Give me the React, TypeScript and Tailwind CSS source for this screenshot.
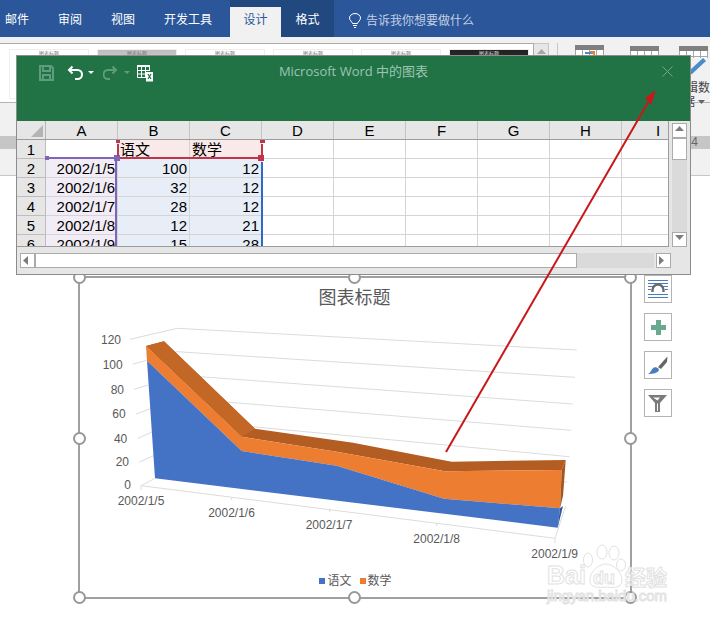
const thumbs = ["bg-white", "bg-gradient-to-b from-[#bdbdbd] to-white", "bg-white", "bg-white", "bg-white", "bg-gradient-to-b from-[#222222] to-[#555555]"];
const colWidths = ["w-[72px]", "w-[72px]", "w-[72px]", "w-[72px]", "w-[72px]", "w-[72px]", "w-[72px]", "w-[72px]", "w-[47px]"];
const colNames = ["A", "B", "C", "D", "E", "F", "G", "H", "I"];
const rows = [
  ["", "语文", "数学"],
  ["2002/1/5", "100", "12"],
  ["2002/1/6", "32", "12"],
  ["2002/1/7", "28", "12"],
  ["2002/1/8", "12", "21"],
  ["2002/1/9", "15", "28"],
];
const yLabels = [
  ["120", 121, 344],
  ["100", 122.7, 369],
  ["80", 124, 394],
  ["60", 125.7, 418],
  ["40", 127.3, 443],
  ["20", 129, 466],
  ["0", 131, 489],
] as const;
const xLabels = [
  ["2002/1/5", 141, 505],
  ["2002/1/6", 231.5, 517],
  ["2002/1/7", 329, 529],
  ["2002/1/8", 436.7, 543],
  ["2002/1/9", 554.7, 558],
] as const;
const handles = [
  "left-[-7px] top-[-7px]", "left-[268px] top-[-7px]", "right-[-7px] top-[-7px]",
  "left-[-7px] top-[154px]", "right-[-7px] top-[154px]",
  "left-[-7px] bottom-[-7px]", "left-[268px] bottom-[-7px]", "right-[-7px] bottom-[-7px]",
];

function cellBg(r: number, c: number) {
  if (r === 0 && (c === 1 || c === 2)) return "bg-[#f9e9e9]";
  if (r > 0 && c === 0) return "bg-[#f1ecf6]";
  if (r > 0 && (c === 1 || c === 2)) return "bg-[#e8eef8]";
  return "bg-white";
}

function Plot() {
  return (
    <svg className="absolute left-[-2px] top-[-2px]" width="554" height="323" viewBox="78 276 554 323">
      {/* walls */}
      <g fill="none" stroke="#dcdcdc" strokeWidth="1">
        <path d="M130 339.3 L177.3 328.3 L576.7 350" />
        <path d="M132.7 364.3 L177 351.7 L575 377.3" />
        <path d="M134 389.3 L148 385 M177 375 L572.7 404" />
        <path d="M135.7 414.3 L152 408 M177 398 L571 430.3" />
        <path d="M137.7 438.3 L152 432 M245 426 L569.3 456.7" />
        <path d="M139 462.3 L155 455" />
        <path d="M141 485.7 L155 478.3" />
        <path d="M141 485.7 L555 538.3 L565.7 506" />
        <path d="M141 485.7 V490 M231.7 497.7 V500 M329.7 509.3 V512 M436.7 523.3 V526 M555 538.3 V543" />
        <path d="M563 482 L567 482" />
      </g>
      <polygon points="146,346 164,341.3 255,428.7 353,442.7 451.7,461.7 565.7,460 561.7,470 445,471.3 336.7,451.7 241.7,436.7" fill="#b45d22" />
      <polygon points="146,346 164,341.3 255,428.7 241.7,436.7" fill="#c36727" />
      <polygon points="146,346 241.7,436.7 336.7,451.7 445,471.3 561.7,470 560,508.3 444,498.7 336.7,465.7 241.7,451 147,360.7" fill="#ed7d31" />
      <polygon points="147,360.7 241.7,451 336.7,465.7 444,498.7 560,508.3 557.7,527.7 155,478.3" fill="#4472c4" />
      <polygon points="565.7,460 561.7,470 560,508.3 563,496" fill="#a4561f" />
      <polygon points="560,508.3 557.7,527.7 563,506" fill="#2f5597" />
      <g fontSize="12" fill="#595959">
        {yLabels.map(([t, x, y]) => (
          <text key={t} x={x} y={y} textAnchor="end">{t}</text>
        ))}
        {xLabels.map(([t, x, y]) => (
          <text key={t} x={x} y={y} textAnchor="middle">{t}</text>
        ))}
      </g>
    </svg>
  );
}

function SideButtons() {
  return (
    <div className="ml-[12px] -mt-px flex flex-col gap-[10px]">
      <div className="flex h-[28px] w-[28px] items-center justify-center border border-[#b4b4b4] bg-white">
        <svg width="20" height="20" viewBox="0 0 20 20">
          <path d="M0 1.5H20 M0 4.5H20 M0 15.5H20 M0 18.5H20 M0 7.5H5 M15 7.5H20 M0 10.5H3 M17 10.5H20" stroke="#4a7ebb" strokeWidth="1" />
          <path d="M4.5 13 V11 a5.5 5.5 0 0 1 11 0 V13" fill="none" stroke="#6b6b6b" strokeWidth="2.4" />
        </svg>
      </div>
      <div className="flex h-[28px] w-[28px] items-center justify-center border border-[#b4b4b4] bg-white">
        <svg width="15" height="15" viewBox="0 0 15 15">
          <path d="M5 0H10V5H15V10H10V15H5V10H0V5H5Z" fill="#6aa88f" />
        </svg>
      </div>
      <div className="flex h-[28px] w-[28px] items-center justify-center border border-[#b4b4b4] bg-white">
        <svg width="20" height="19" viewBox="0 0 20 19">
          <path d="M10 11 L18 2 L19.5 0.5 L19 6 L13 13 Z" fill="#666666" />
          <path d="M0 18 C3 17 3 13 6 11.5 C8 10.5 11 12 11 14 C10 17 5 18 0 18Z" fill="#4a7ebb" />
        </svg>
      </div>
      <div className="flex h-[28px] w-[28px] items-center justify-center border border-[#b4b4b4] bg-white">
        <svg width="20" height="17" viewBox="0 0 20 17">
          <path d="M0 0H19L12 8V17H7V8Z" fill="#7a7a7a" />
          <path d="M9 8.5H10V16H9Z M5 2.5 H12 L9.5 5.5Z" fill="#ffffff" />
        </svg>
      </div>
    </div>
  );
}

function Sheet() {
  return (
    <div className="relative h-[126px] w-[652px] overflow-hidden border-r border-b border-[#9c9c9c] text-[15px] leading-[20px] text-black">
      <div className="flex h-[19px] border-b border-[#9c9c9c] bg-[#e6e6e6]">
        <div className="flex w-[29px] shrink-0 items-end justify-end border-r border-[#b5b5b5] pr-[2px] pb-[2px]">
          <svg width="12" height="12" viewBox="0 0 12 12"><path d="M12 0V12H0Z" fill="#b4b4b4" /></svg>
        </div>
        {colNames.map((c, i) => (
          <div key={c} className={colWidths[i] + " shrink-0 border-r border-[#c4c4c4] " + (c === "I" ? "pl-[34px] text-left" : "text-center")}>{c}</div>
        ))}
      </div>
      {rows.map((row, r) => (
        <div key={r} className="flex h-[19px]">
          <div className="w-[29px] shrink-0 border-r border-b border-[#bdbdbd] bg-[#e6e6e6] text-center">{r + 1}</div>
          {colWidths.map((w, c) => (
            <div
              key={c}
              className={
                w + " shrink-0 overflow-hidden border-r border-b border-[#d4d4d4] px-[2px] whitespace-nowrap " + cellBg(r, c) + " " +
                (r > 0 ? "text-right" : "text-left")
              }
            >
              {row[c] ?? ""}
            </div>
          ))}
        </div>
      ))}
      {/* range highlights */}
      <div className="absolute left-[31px] top-[36px] h-[2px] w-[68px] bg-[#8064b8]" />
      <div className="absolute left-[28px] top-[35px] h-[4px] w-[4px] bg-[#8064b8]" />
      <div className="absolute left-[98px] top-[40px] h-[86px] w-[2px] bg-[#8064b8]" />
      <div className="absolute left-[97px] top-[34px] h-[6px] w-[6px] bg-[#8064b8]" />
      <div className="absolute left-[103px] top-[36px] h-[2px] w-[138px] bg-[#c0354a]" />
      <div className="absolute left-[99px] top-[19px] h-[3px] w-[4px] bg-[#c0354a]" />
      <div className="absolute left-[100px] top-[23px] h-[12px] w-[2px] bg-[#c0354a]" />
      <div className="absolute left-[243px] top-[19px] h-[3px] w-[5px] bg-[#c0354a]" />
      <div className="absolute left-[244px] top-[23px] h-[12px] w-[2px] bg-[#c0354a]" />
      <div className="absolute left-[241px] top-[34px] h-[6px] w-[6px] bg-[#c0354a]" />
      <div className="absolute left-[244px] top-[41px] h-[85px] w-[2px] bg-[#2e69c8]" />
    </div>
  );
}

function ScrollButton({ dir }: { dir: "up" | "down" | "left" | "right" }) {
  const d = { up: "M0 5L4.5 0L9 5Z", down: "M0 0H9L4.5 5Z", left: "M5 0V9L0 4.5Z", right: "M0 0V9L5 4.5Z" }[dir];
  return (
    <div className="flex h-[15px] w-[15px] shrink-0 items-center justify-center border border-[#ababab] bg-white">
      <svg width="9" height="9" viewBox="0 0 9 9" className="overflow-visible"><path d={d} fill="#7d7d7d" /></svg>
    </div>
  );
}

function ChartDialog() {
  return (
    <div className="absolute left-[16px] top-[55px] z-10 h-[220px] w-[675px] border border-[#8c8c8c] bg-[#e6e6e6]">
      {/* title bar */}
      <div className="relative h-[65px] bg-[#217346] text-center font-['Open_Sans','Noto_Sans_CJK_SC',sans-serif] text-[13px] leading-[31px] text-[#9cc5b0]">
        Microsoft Word 中的图表
        <svg className="absolute left-[22px] top-[9px]" width="15" height="16" viewBox="0 0 15 16">
          <path d="M1 1H12L14 3V15H1Z M4 1.5V6H11V1.5 M4 15V10H11V15" fill="none" stroke="#5e9c7d" strokeWidth="2" />
        </svg>
        <svg className="absolute left-[50px] top-[9px]" width="28" height="16" viewBox="0 0 28 16">
          <path d="M5.5 1.5L2 5L5.5 8.5 M2.5 5H10.5a4.5 4.5 0 0 1 0 9H8" fill="none" stroke="#ffffff" strokeWidth="2" />
          <path d="M21 6H27L24 9Z" fill="#ffffff" />
        </svg>
        <svg className="absolute left-[86px] top-[9px]" width="28" height="16" viewBox="0 0 28 16">
          <path d="M9.5 1.5L13 5L9.5 8.5 M12.5 5H5a4.5 4.5 0 0 0 0 9H7" fill="none" stroke="#5e9c7d" strokeWidth="2" />
          <path d="M21 6H27L24 9Z" fill="#5e9c7d" />
        </svg>
        <svg className="absolute left-[120px] top-[9px]" width="17" height="17" viewBox="0 0 17 17">
          <path d="M0 0H13V2H0Z" fill="#ffffff" />
          <path d="M0.5 2V12.5H13M4.5 2V12.5M8.5 2V12.5M12.5 2V6M0.5 5.5H12.5M0.5 9H8" fill="none" stroke="#ffffff" strokeWidth="1" />
          <path d="M9 7H16V16.5H9Z" fill="#ffffff" />
          <path d="M11 9L14 14M14 9L11 14" stroke="#217346" strokeWidth="1.2" />
        </svg>
        <svg className="absolute left-[645px] top-[10px]" width="11" height="11" viewBox="0 0 11 11">
          <path d="M0.5 0.5L10.5 10.5M10.5 0.5L0.5 10.5" stroke="#6ea88a" strokeWidth="1" />
        </svg>
      </div>
      <div className="flex">
        <Sheet />
        <div className="ml-[3px] flex h-[124px] w-[15px] flex-col justify-between self-end bg-[#dadada]">
          <div>
            <ScrollButton dir="up" />
            <div className="h-[22px] w-[15px] border border-[#ababab] bg-white" />
          </div>
          <ScrollButton dir="down" />
        </div>
      </div>
      <div className="mt-[6px] flex h-[15px] w-[654px] pl-[3px]">
        <ScrollButton dir="left" />
        <div className="flex flex-1 bg-[#dadada]">
          <div className="h-[15px] w-[542px] border border-[#ababab] bg-white" />
        </div>
        <div className="ml-[2px]"><ScrollButton dir="right" /></div>
      </div>
    </div>
  );
}

function TableGlyph({ arrow }: { arrow?: boolean }) {
  return (
    <svg width="29" height="12" viewBox="0 0 29 12">
      <rect x="0" y="0" width="29" height="5" fill="#7f7f7f" />
      <rect x="0" y="5" width="29" height="7" fill="#ffffff" />
      <path d="M0.5 5V12M7.5 5V12M14.5 5V12M21.5 5V12M28.5 5V12M0 10.5H29" stroke="#a6a6a6" strokeWidth="1" />
      {arrow && <path d="M10 8H18" stroke="#4a8bc9" strokeWidth="2" />}
      {arrow && <path d="M14 6H20V11Z" fill="#ed7d31" />}
    </svg>
  );
}

export default function App() {
  return (
    <div className="relative h-[622px] w-[710px] overflow-hidden bg-white font-['Liberation_Sans','Noto_Sans_CJK_SC',sans-serif]">
      {/* tabs */}
      <div className="flex h-[37px] bg-[#2b579a] pl-[5px] text-[12px] text-white">
        <div className="flex gap-[29px] leading-[41px]">
          <span>邮件</span>
          <span>审阅</span>
          <span>视图</span>
          <span>开发工具</span>
        </div>
        <div className="ml-[18px] flex bg-[#21487f]">
          <div className="mt-[7px] w-[51px] bg-[#f1f1f1] text-center leading-[27px] text-[#2b579a]">设计</div>
          <div className="w-[53px] text-center leading-[41px]">格式</div>
        </div>
        <div className="ml-[15px] flex items-center gap-[5px] pt-[4px] text-[#c3d0e3]">
          <svg width="12" height="15" viewBox="0 0 12 15" fill="none" stroke="#ffffff" strokeWidth="1">
            <path d="M3.5 10.5C3 8.5 .5 7.5 .5 5a5.5 4.5 0 0 1 11 0C11.5 7.5 9 8.5 8.5 10.5Z M4 12.5H8 M5 14.5H7" />
          </svg>
          <span>告诉我你想要做什么</span>
        </div>
      </div>
      {/* ribbon */}
      <div className="flex h-[66px] border-b border-[#b4b4b4] bg-[#f1f1f1] pt-[6px]">
        <div className="flex h-[59px] w-[534px] gap-[8px] overflow-hidden border-t border-r border-[#ababab] bg-white pt-[5px] pl-[9px]">
          {thumbs.map((t, i) => (
            <div key={i} className={t + " h-[50px] w-[80px] shrink-0 border border-[#eeeeee] text-center text-[5px] leading-[7px] " + (i === 5 ? "text-[#dddddd]" : "text-[#777777]")}>
              图表标题
            </div>
          ))}
        </div>
        <div className="flex h-[59px] w-[15px] justify-center border-t border-r border-[#c6c6c6] bg-[#e6e6e6] pt-[5px]">
          <svg width="9" height="5" viewBox="0 0 9 5"><path d="M0 5L4.5 0L9 5Z" fill="#a6a6a6" /></svg>
        </div>
        <div className="ml-[8px] h-[58px] w-px bg-[#c6c6c6]" />
        <div className="ml-[17px] mt-[2px]"><TableGlyph arrow /></div>
        <div className="ml-[26px] mt-[3px]"><TableGlyph /></div>
        <div className="ml-[15px] w-[36px] text-[12px] leading-[16px] whitespace-nowrap text-[#444444]">
          <div className="ml-[5px] mt-[3px] h-[12px]"><TableGlyph /></div>
          <svg className="ml-[14px] -mt-[2px] mb-[6px]" width="20" height="19" viewBox="0 0 20 19">
            <path d="M1 15L15 2L18 5L4 18L0 19Z" fill="#4a8bc9" />
          </svg>
          <div className="leading-[14px]">编辑数</div>
          <div className="flex items-center pl-[9px] leading-[14px]">据<svg className="ml-[3px]" width="7" height="4" viewBox="0 0 7 4"><path d="M0 0H7L3.5 4Z" fill="#666666" /></svg></div>
        </div>
      </div>
      {/* ruler band */}
      <div className="h-[73px] border-b border-[#c6c6c6] bg-[#f1f1f1] pt-[33px]">
        <div className="h-[13px] bg-[#c6c6c6] pr-[12px] text-right text-[12px] leading-[13px] text-[#666666]">4</div>
      </div>
      {/* document */}
      <div className="flex pt-[100px] pl-[78px]">
        <div className="relative h-[323px] w-[554px] border-2 border-[#a0a0a0] bg-white">
          <Plot />
          <div className="absolute inset-x-0 top-[8px] pr-[1px] text-center text-[18px] leading-[24px] text-[#595959]">图表标题</div>
          <div className="absolute inset-x-0 bottom-[8px] flex justify-center gap-[8px] pl-[1px] text-[12px] leading-[16px] text-[#595959]">
            <span className="flex items-center gap-[2px]"><i className="h-[6px] w-[6px] bg-[#4472c4]" />语文</span>
            <span className="flex items-center gap-[2px]"><i className="h-[6px] w-[6px] bg-[#ed7d31]" />数学</span>
          </div>
          {handles.map((h) => (
            <div key={h} className={"absolute h-[13px] w-[13px] rounded-full border-2 border-[#989898] bg-white " + h} />
          ))}
        </div>
        <SideButtons />
      </div>
      <ChartDialog />
      {/* watermark */}
      <svg className="pointer-events-none absolute left-[540px] top-[540px] z-20" width="140" height="75" viewBox="0 0 140 75" fill="#ffffff" fillOpacity="0.7" stroke="#e2e2e2" strokeWidth="1">
        <ellipse cx="48" cy="20" rx="4.5" ry="7" />
        <ellipse cx="62" cy="12" rx="5" ry="7" />
        <ellipse cx="74" cy="13" rx="5" ry="7" />
        <ellipse cx="81" cy="25" rx="4.5" ry="6" />
        <path d="M50 40C50 30 60 24 66 24C73 24 82 32 82 40C82 48 74 48 66 47C58 48 50 48 50 40Z" />
        <text x="7" y="44" fontSize="25" fontWeight="700" fontFamily="Liberation Sans">Bai</text>
        <text x="53" y="44" fontSize="18" fontWeight="700" fontFamily="Liberation Sans">du</text>
        <text x="85" y="45" fontSize="21" fontWeight="700" fontFamily="Noto Sans CJK SC">经验</text>
        <text x="7" y="61" fontSize="15" textLength="120" fontFamily="Liberation Sans">jingyan.baidu.com</text>
      </svg>
      {/* arrow */}
      <svg className="pointer-events-none absolute left-0 top-0 z-30" width="710" height="622" viewBox="0 0 710 622">
        <path d="M446 452L650 99" stroke="#c8181c" strokeWidth="2" fill="none" />
        <path d="M655 91L651 104L645.7 98Z" fill="#c8181c" stroke="#c8181c" />
      </svg>
    </div>
  );
}
